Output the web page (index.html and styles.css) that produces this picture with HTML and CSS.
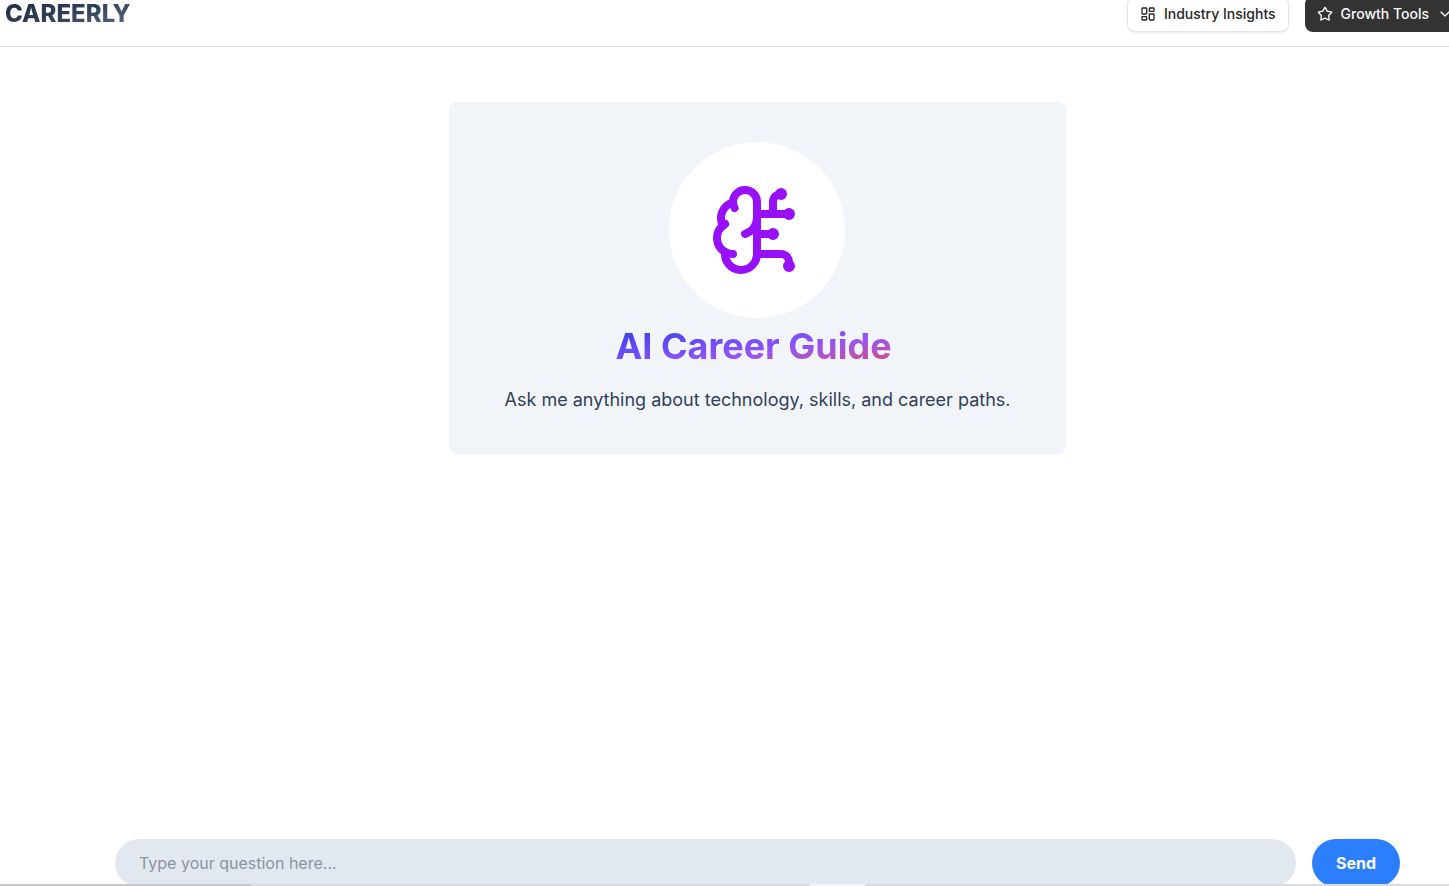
FILE: index.html
```html
<!DOCTYPE html>
<html lang="en">
<head>
<meta charset="utf-8">
<title>Careerly – AI Career Guide</title>
<link rel="stylesheet" href="styles.css">
</head>
<body>
<header class="header">
  <a class="logo" href="#">CAREERLY</a>
  <nav class="nav">
    <button class="btn btn-outline" type="button">
      <svg class="icon" viewBox="0 0 24 24"><rect width="7" height="9" x="3" y="3" rx="1"/><rect width="7" height="5" x="14" y="3" rx="1"/><rect width="7" height="9" x="14" y="12" rx="1"/><rect width="7" height="5" x="3" y="16" rx="1"/></svg>
      Industry Insights
    </button>
    <button class="btn btn-dark" type="button">
      <svg class="icon" viewBox="0 0 24 24"><path d="M11.525 2.295a.53.53 0 0 1 .95 0l2.31 4.679a2.123 2.123 0 0 0 1.595 1.16l5.166.756a.53.53 0 0 1 .294.904l-3.736 3.638a2.123 2.123 0 0 0-.611 1.878l.882 5.14a.53.53 0 0 1-.771.56l-4.618-2.428a2.122 2.122 0 0 0-1.973 0L6.396 21.01a.53.53 0 0 1-.77-.56l.881-5.139a2.122 2.122 0 0 0-.611-1.879L2.16 9.795a.53.53 0 0 1 .294-.906l5.165-.755a2.122 2.122 0 0 0 1.597-1.16z"/></svg>
      Growth Tools
      <svg class="icon" viewBox="0 0 24 24"><path d="m6 9 6 6 6-6"/></svg>
    </button>
  </nav>
</header>
<main class="main">
  <section class="card">
    <div class="avatar">
      <svg class="brain" viewBox="0 0 24 24"><path d="M12 5a3 3 0 1 0-5.997.125 4 4 0 0 0-2.526 5.77 4 4 0 0 0 .556 6.588A4 4 0 1 0 12 18Z"/><path d="M9 13a4.5 4.5 0 0 0 3-4"/><path d="M6.003 5.125A3 3 0 0 0 6.401 6.5"/><path d="M3.477 10.896a4 4 0 0 1 .585-.396"/><path d="M6 18a4 4 0 0 1-1.967-.516"/><path d="M12 13h4"/><path d="M12 18h6a2 2 0 0 1 2 2v1"/><path d="M12 8h8"/><path d="M16 8V5a2 2 0 0 1 2-2"/><circle cx="16" cy="13" r=".5"/><circle cx="18" cy="3" r=".5"/><circle cx="20" cy="21" r=".5"/><circle cx="20" cy="8" r=".5"/></svg>
    </div>
    <h1 class="title">AI Career Guide</h1>
    <p class="lead">Ask me anything about technology, skills, and career paths.</p>
  </section>
  <form class="ask">
    <input class="ask-input" type="text" aria-label="Your question" placeholder="Type your question here...">
    <button class="ask-send" type="button">Send</button>
  </form>
</main>
<div class="strip"></div>
</body>
</html>
```
FILE: styles.css
```css
* {
  box-sizing: border-box;
}

body {
  margin: 0;
  height: 100vh;
  overflow: hidden;
  display: flex;
  flex-direction: column;
  background: #fff;
  color: #0a0a0a;
  font-family: Inter, "Liberation Sans", sans-serif;
}

.header {
  display: flex;
  justify-content: space-between;
  align-items: flex-end;
  height: 47px;
  padding: 0 0 14px 5px;
  border-bottom: 1px solid #e2e2e2;
}

.logo {
  font-size: 24px;
  line-height: 36px;
  font-weight: 800;
  text-decoration: none;
  color: transparent;
  background: linear-gradient(to bottom right, #1d293d, #314158, #62748e);
  background-clip: text;
  -webkit-background-clip: text;
}

.nav {
  display: flex;
  gap: 16px;
  margin-right: -16px;
}

.btn {
  display: flex;
  align-items: center;
  gap: 8px;
  height: 36px;
  padding: 0 12px;
  border: 1px solid #e5e5e5;
  border-radius: 8px;
  font: 500 14px/20px Inter, "Liberation Sans", sans-serif;
  white-space: nowrap;
}

.btn-outline {
  background: #fff;
  color: #262626;
  box-shadow: 0 1px 2px rgba(0, 0, 0, 0.08);
}

.btn-dark {
  border: 0;
  background: #333;
  color: #fafafa;
}

.icon,
.brain {
  fill: none;
  stroke: currentColor;
  stroke-width: 2;
  stroke-linecap: round;
  stroke-linejoin: round;
}

.icon {
  width: 16px;
  height: 16px;
}

.main {
  flex: 1;
  display: flex;
  flex-direction: column;
  align-items: center;
  justify-content: space-between;
  padding: 55px 49px 0 115px;
}

.card {
  display: flex;
  flex-direction: column;
  align-items: center;
  padding: 40px 56px;
  border-radius: 8px;
  background: #f1f5f9;
}

.avatar {
  padding: 40px;
  border-radius: 50%;
  background: #fff;
  color: #9810fa;
}

.brain {
  display: block;
  width: 96px;
  height: 96px;
}

.title {
  margin: 8px 0 20px;
  padding-right: 8px;
  font-size: 36px;
  line-height: 40px;
  font-weight: 700;
  color: transparent;
  background: linear-gradient(to bottom right in oklab, #203cec, #8e51ff 55%, #dc3a72);
  background-clip: text;
  -webkit-background-clip: text;
}

.lead {
  margin: 0;
  font-size: 18px;
  line-height: 28px;
  color: #314158;
}

.ask {
  display: flex;
  gap: 16px;
  align-self: stretch;
  margin-bottom: -1px;
}

.ask-input {
  flex: 1;
  height: 48px;
  padding: 0 24px;
  border: 0;
  border-radius: 24px;
  background: #e2e8f0;
  font: 400 16px/24px Inter, "Liberation Sans", sans-serif;
}

.ask-input::placeholder {
  color: #8b94a3;
}

.ask-send {
  height: 48px;
  padding: 0 24px;
  border: 0;
  border-radius: 24px;
  background: #2b7fff;
  color: #fff;
  font: 700 16px/24px Inter, "Liberation Sans", sans-serif;
}

.strip {
  position: fixed;
  left: 0;
  right: 0;
  bottom: 0;
  height: 2px;
  background: linear-gradient(to right, #c8c8c8 251px, #dcdcdc 251px 810px, #f3f3f3 810px 865px, #dcdcdc 865px);
}
```
